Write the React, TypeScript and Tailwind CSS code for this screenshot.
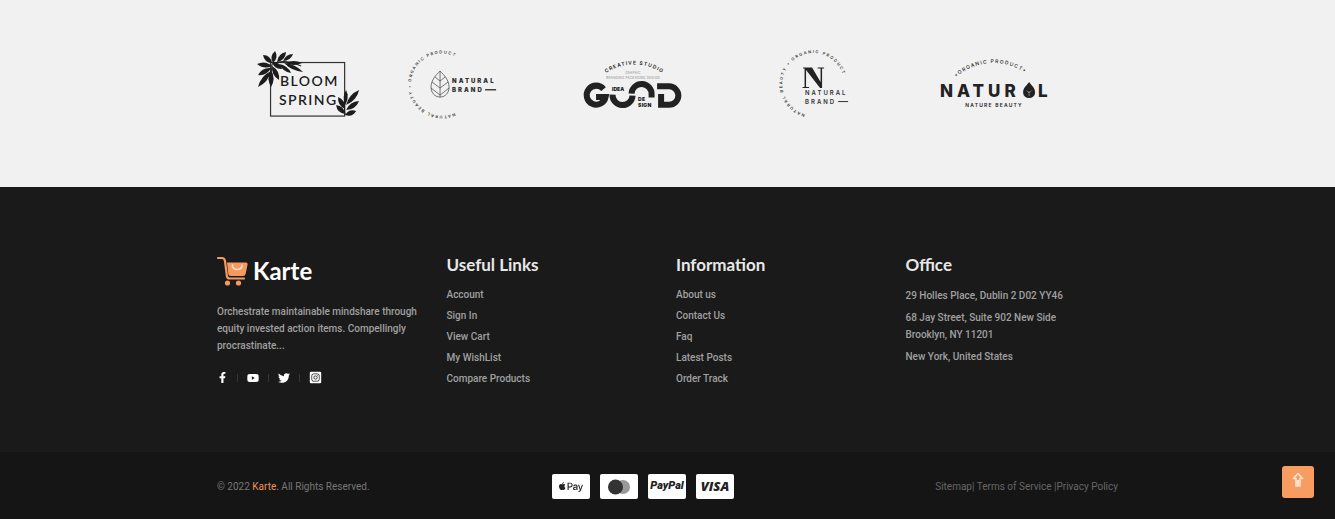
import React from "react";
import { FaApplePay, FaFacebookF, FaTwitter, FaYoutube, FaInstagramSquare } from "react-icons/fa";

type LeafSpec = [number, number, number, number, number];

function Leaf({ spec }: { spec: LeafSpec }) {
  const [x1, y1, x2, y2, w] = spec;
  const dx = x2 - x1;
  const dy = y2 - y1;
  const len = Math.hypot(dx, dy);
  const nx = (-dy / len) * w;
  const ny = (dx / len) * w;
  const mx = x1 + dx * 0.5;
  const my = y1 + dy * 0.5;
  return <path d={`M${x1} ${y1}Q${mx + nx} ${my + ny} ${x2} ${y2}Q${mx - nx} ${my - ny} ${x1} ${y1}Z`} />;
}

const bloomLeaves: LeafSpec[] = [
  [56, 23, 58, 11, 5],
  [60, 22, 69, 12, 5],
  [66, 21, 76, 14, 4],
  [68, 23, 85, 23, 4],
  [67, 23, 86, 32, 4],
  [62, 24, 74, 33, 4],
  [55, 23, 46, 15, 5],
  [55, 26, 40, 24, 5],
  [54, 28, 41, 35, 5],
  [54, 31, 41, 47, 5],
  [54, 30, 54, 47, 5],
  [55, 26, 62, 40, 5],
  [55, 22, 65, 29, 5],
  [128, 65, 129, 50, 4],
  [129, 65, 142, 50, 5],
  [129, 70, 142, 61, 5],
  [128, 75, 139, 71, 5],
  [128, 69, 121, 57, 5],
  [128, 74, 119, 65, 5],
];

function BloomSpring() {
  return (
    <svg viewBox="0 0 180 90" className="w-full fill-[#1c1c1c]" role="img" aria-label="Bloom Spring">
      <rect x="53.5" y="22.5" width="74" height="53.5" fill="none" stroke="#333" strokeWidth="1.2" />
      <path d="M84 26Q66 18 55 24Q54 36 52 40M128 75Q126 62 130 54" fill="none" stroke="#1c1c1c" strokeWidth="1" />
      {bloomLeaves.map((spec, i) => (
        <Leaf key={i} spec={spec} />
      ))}
      <text x="63" y="46" className="font-['Lato',sans-serif] text-[14px] font-semibold tracking-widest">BLOOM</text>
      <text x="62" y="65" className="font-['Lato',sans-serif] text-[14px] font-semibold tracking-widest">SPRING</text>
    </svg>
  );
}

function NaturalLeaf() {
  return (
    <svg viewBox="0 0 180 90" className="w-full fill-[#333]" role="img" aria-label="Natural Brand">
      <path id="ring-leaf" d="M57.6 72.8A31 31 0 1 1 62 18.7" fill="none" />
      <text className="font-['Inter',sans-serif] text-[4px] font-semibold tracking-[1.4px]">
        <textPath href="#ring-leaf">NATURAL BEAUTY • ORGANIC PRODUCT</textPath>
      </text>
      <g fill="none" stroke="#555" strokeWidth="0.8">
        <path d="M43 31C39 35 34 40 34 47C34 53 38 57 43 57C48 57 52 53 52 47C52 40 47 35 43 31Z" />
        <path d="M43 31V57M43 41L38 37M43 41L48 37M43 48L35 42M43 48L51 42M43 55L34 48M43 55L52 48" />
      </g>
      <text x="55" y="43" className="font-['Inter',sans-serif] text-[6px] font-black tracking-[2px]">NATURAL</text>
      <text x="55" y="52" className="font-['Inter',sans-serif] text-[6px] font-black tracking-[2px]">BRAND</text>
      <path d="M88 49h11v1.400h-11z" />
    </svg>
  );
}

function GoodIdea() {
  return (
    <svg viewBox="0 0 180 90" className="w-full fill-[#222]" role="img" aria-label="Good Idea Design">
      <path id="arc-studio" d="M29 33A50 50 0 0 1 85 33" fill="none" />
      <text className="font-['Inter',sans-serif] text-[5px] font-semibold tracking-[1px]">
        <textPath href="#arc-studio">CREATIVE STUDIO</textPath>
      </text>
      <text x="56" y="34" textAnchor="middle" className="fill-[#888] font-['Inter',sans-serif] text-[3px] tracking-widest">GRAPHIC</text>
      <text x="56" y="39" textAnchor="middle" className="fill-[#888] font-['Inter',sans-serif] text-[3px] tracking-widest">BRANDING PACKAGING DESIGN</text>
      <g fill="none" stroke="#222" strokeWidth="6">
        <path d="M26.500 49A9.500 9.500 0 1 0 28.500 57H19" />
        <path d="M35.500 54.500a10 10 0 0 0 20 1" />
        <path d="M54.500 53.500a10 10 0 0 1 20 1v3" />
        <path d="M80 46.300h12a9 9 0 0 1 0 18.500H84V54" />
      </g>
      <text x="35" y="51" className="font-['Inter',sans-serif] text-[5px] font-black">IDEA</text>
      <text x="61" y="61" className="font-['Inter',sans-serif] text-[5px] font-black tracking-wider">DE</text>
      <text x="61" y="67" className="font-['Inter',sans-serif] text-[5px] font-black tracking-wider">SIGN</text>
    </svg>
  );
}

function NaturalN() {
  return (
    <svg viewBox="0 0 180 90" className="w-full fill-[#333]" role="img" aria-label="Natural Brand">
      <path id="ring-n" d="M47 74A31 31 0 1 1 86 40" fill="none" />
      <text className="font-['Inter',sans-serif] text-[4px] font-semibold tracking-[1.5px]">
        <textPath href="#ring-n">NATURAL BEAUTY • ORGANIC PRODUCT</textPath>
      </text>
      <g fill="#222">
        <path d="M45 27.500h9L62.500 42V28.500h-3v-1h6.500v1h-2V48h-2L48 30V47h3v1h-6.500v-1h2V28.500H45z" />
      </g>
      <text x="47" y="55" className="font-['Inter',sans-serif] text-[6px] font-semibold tracking-[2px]">NATURAL</text>
      <text x="47" y="64" className="font-['Inter',sans-serif] text-[6px] font-semibold tracking-[2px]">BRAND</text>
      <path d="M80 61h10v1h-10z" />
    </svg>
  );
}

function NaturalDrop() {
  return (
    <svg viewBox="0 0 180 90" className="w-full fill-[#222]" role="img" aria-label="Natural, nature beauty">
      <path id="arc-organic" d="M18 37A57 57 0 0 1 96 40" fill="none" />
      <text className="font-['Inter',sans-serif] text-[5px] font-medium tracking-[1.2px]">
        <textPath href="#arc-organic">•ORGANIC PRODUCT•</textPath>
      </text>
      <text x="2" y="57" className="font-['Inter',sans-serif] text-[17px] font-extrabold tracking-[4px]">NATUR</text>
      <path d="M91 42C88 46 85 48 85 52.500a6 5.500 0 0 0 12 0C97 48 94 46 91 42Z" />
      <path d="M91 56v-5M91 53l-2.500-2.500M91 53l2.500-2.500" fill="none" stroke="#999" strokeWidth="0.7" />
      <text x="100" y="57" className="font-['Inter',sans-serif] text-[17px] font-extrabold">L</text>
      <text x="56" y="67" textAnchor="middle" className="font-['Inter',sans-serif] text-[5px] font-semibold tracking-[1.2px]">NATURE BEAUTY</text>
    </svg>
  );
}

function CartLogo() {
  return (
    <svg viewBox="0 0 31 31" className="size-[31px]" aria-hidden="true">
      <path d="M1 2H5Q7.500 2 8 5L10 20.500Q10.300 22.500 13 22.500H27" fill="none" stroke="#f59a5f" strokeWidth="2.200" strokeLinecap="round" />
      <path d="M10 6.500H29Q31 6.500 30.600 8.500L28.600 18Q28 20 26 20H13.500Q11.500 20 11.300 18Z" fill="#f59a5f" />
      <path d="M15.500 9v1.500a5 4.500 0 0 0 9.500 0V9" fill="none" stroke="#ffe0ca" strokeWidth="1.500" strokeLinecap="round" />
      <circle cx="10.500" cy="27" r="2.600" fill="#f59a5f" />
      <circle cx="21.500" cy="27" r="2.600" fill="#f59a5f" />
    </svg>
  );
}

function LinkColumn({ title, links }: { title: string; links: string[] }) {
  return (
    <nav aria-label={title}>
      <h2 className="font-['Lato',sans-serif] text-[17px] leading-5 font-bold text-[#e8e8e8]">{title}</h2>
      <ul className="mt-[11px]">
        {links.map((link) => (
          <li key={link} className="h-[21px] leading-[17px]">
            <a href="#">{link}</a>
          </li>
        ))}
      </ul>
    </nav>
  );
}

const socials = [
  { label: "Facebook", icon: <FaFacebookF className="size-[11px]" /> },
  { label: "YouTube", icon: <FaYoutube className="size-3" /> },
  { label: "Twitter", icon: <FaTwitter className="size-3" /> },
  { label: "Instagram", icon: <FaInstagramSquare className="size-[13px]" /> },
];

const cardClass = "flex h-[25px] w-[38px] items-center justify-center overflow-hidden rounded-[2px] bg-white text-[#222]";

export default function App() {
  return (
    <div className="min-h-screen bg-[#151515] font-['Roboto',sans-serif] text-[10px] text-[#a0a0a0]">
      <section className="bg-[#f1f1f1] pt-10 pb-[57px]" aria-label="Brands">
        <div className="mx-auto grid max-w-[901px] grid-cols-5">
          <BloomSpring />
          <NaturalLeaf />
          <GoodIdea />
          <NaturalN />
          <NaturalDrop />
        </div>
      </section>

      <footer>
        <div className="bg-[#1a1a1a] pt-[68px] pb-[61px] font-medium">
          <div className="mx-auto grid max-w-[901px] grid-cols-4 gap-[17px]">
            <div className="-mr-2">
              <a href="#" className="flex items-center gap-[5px]">
                <CartLogo />
                <span className="font-['Lato',sans-serif] text-[24px] leading-8 font-bold text-white">Karte</span>
              </a>
              <p className="mt-4 leading-[17px]">Orchestrate maintainable mindshare through equity invested action items. Compellingly procrastinate...</p>
              <ul className="mt-[17px] flex items-center text-white">
                {socials.map((s) => (
                  <li key={s.label} className="flex items-center not-first:before:mr-[9px] not-first:before:ml-[9px] not-first:before:h-2 not-first:before:w-px not-first:before:bg-[#363636]">
                    <a href="#" aria-label={s.label}>{s.icon}</a>
                  </li>
                ))}
              </ul>
            </div>
            <LinkColumn title="Useful Links" links={["Account", "Sign In", "View Cart", "My WishList", "Compare Products"]} />
            <LinkColumn title="Information" links={["About us", "Contact Us", "Faq", "Latest Posts", "Order Track"]} />
            <div>
              <h2 className="font-['Lato',sans-serif] text-[17px] leading-5 font-bold text-[#e8e8e8]">Office</h2>
              <address className="mt-3 flex flex-col gap-[5px] leading-[17px] not-italic">
                <p>29 Holles Place, Dublin 2 D02 YY46</p>
                <p>68 Jay Street, Suite 902 New Side<br />Brooklyn, NY 11201</p>
                <p>New York, United States</p>
              </address>
            </div>
          </div>
        </div>

        <div className="bg-[#151515] py-[22px] text-[#777]">
          <div className="mx-auto grid max-w-[901px] grid-cols-[335fr_383fr_183fr] items-center">
            <p>© 2022 <a href="#" className="text-[#e8935c]">Karte.</a> All Rights Reserved.</p>
            <ul className="flex gap-[10px]">
              <li className={cardClass} aria-label="Apple Pay"><FaApplePay className="size-6" /></li>
              <li className={cardClass} aria-label="Mastercard">
                <svg viewBox="0 0 24 16" className="h-4 w-6" aria-hidden="true">
                  <circle cx="16" cy="8" r="7" fill="#999" />
                  <circle cx="8.500" cy="8" r="7.500" fill="#333" />
                </svg>
              </li>
              <li className={cardClass}><span className="text-[11px] font-black italic">PayPal</span></li>
              <li className={cardClass}><span className="font-['Open_Sans',sans-serif] text-[13px] font-extrabold italic">VISA</span></li>
            </ul>
            <p className="justify-self-end whitespace-nowrap text-[#666]">
              <a href="#">Sitemap</a>| <a href="#">Terms of Service</a> |<a href="#">Privacy Policy</a>
            </p>
          </div>
        </div>
      </footer>

      <button type="button" aria-label="Back to top" className="fixed right-[21px] bottom-[21px] flex size-8 items-center justify-center rounded-[3px] bg-[#f89d62]">
        <svg viewBox="0 0 12 16" className="mb-1 h-4 w-3" fill="none" stroke="#ffe3cc" strokeWidth="1.600" strokeLinejoin="round" aria-hidden="true">
          <path d="M6 1.500L10.500 6.500H8V14H4V6.500H1.500Z" />
          <path d="M6 8V14" strokeWidth="2.500" />
        </svg>
      </button>
    </div>
  );
}
